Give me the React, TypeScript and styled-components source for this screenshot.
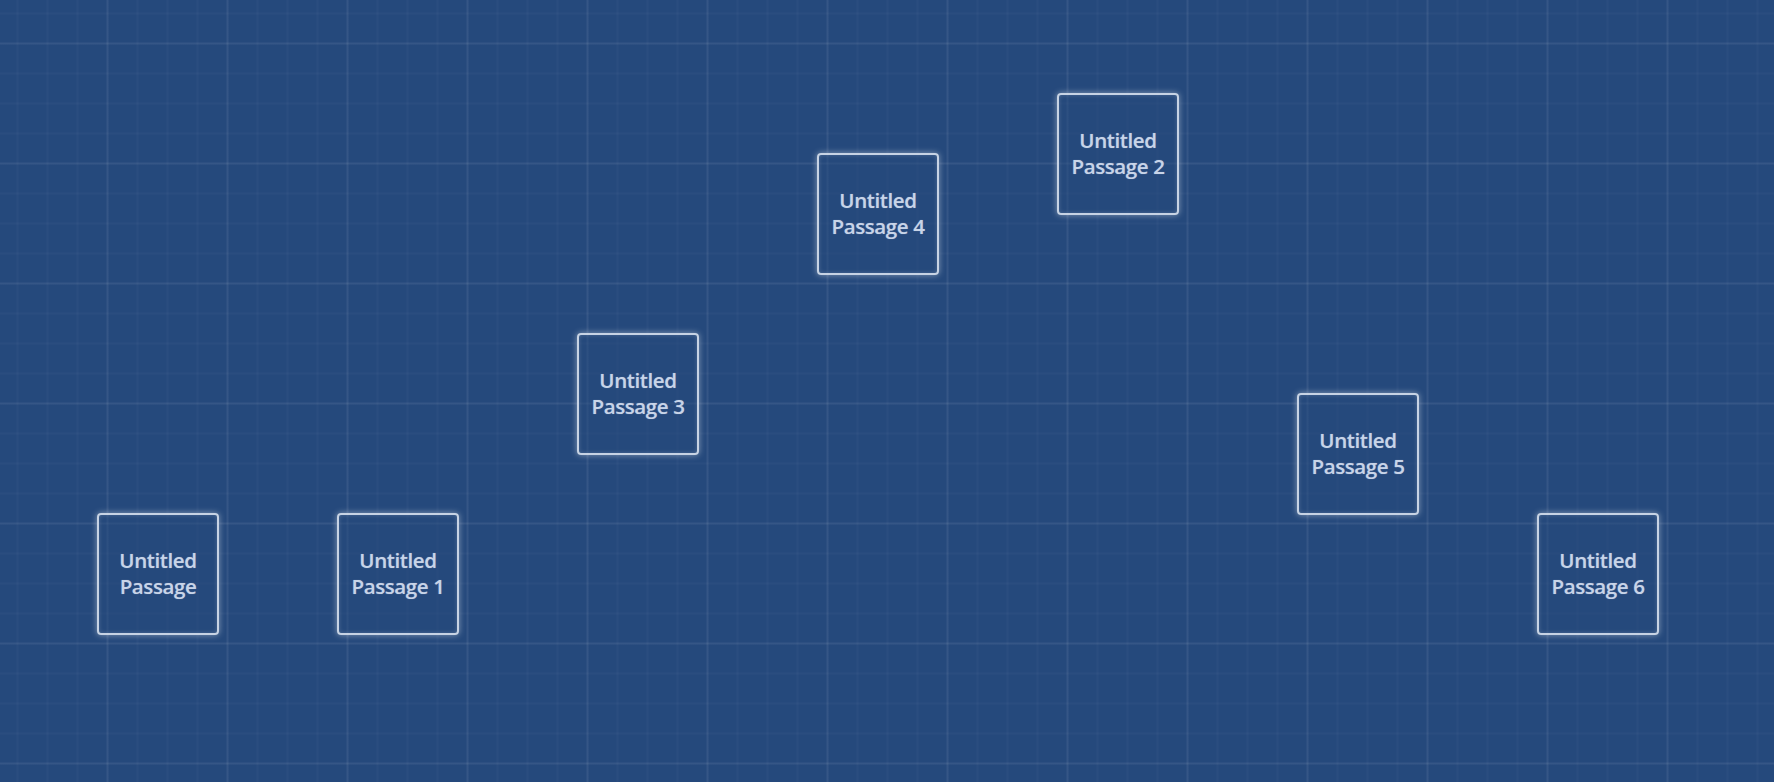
import styled, { createGlobalStyle } from 'styled-components'

const GlobalStyle = createGlobalStyle`
    html, body {
        margin: 0;
        padding: 0;
        height: 100%;
    }
    #root {
        height: 100%;
    }
`

type passage = {
    name: string
    left: number
    top: number
}

const passages: passage[] = [
    { name: 'Untitled Passage', left: 97, top: 513 },
    { name: 'Untitled Passage 1', left: 337, top: 513 },
    { name: 'Untitled Passage 3', left: 577, top: 333 },
    { name: 'Untitled Passage 4', left: 817, top: 153 },
    { name: 'Untitled Passage 2', left: 1057, top: 93 },
    { name: 'Untitled Passage 5', left: 1297, top: 393 },
    { name: 'Untitled Passage 6', left: 1537, top: 513 },
]

const StoryMap = styled.div`
    position: relative;
    width: 100vw;
    height: 100vh;
    overflow: hidden;
    background-color: #25497c;
    background-image:
        linear-gradient(to right, transparent 0, rgba(255, 255, 255, 0.05) 1px, rgba(255, 255, 255, 0.05) 2px, transparent 3px),
        linear-gradient(to bottom, transparent 0, rgba(255, 255, 255, 0.05) 1px, rgba(255, 255, 255, 0.05) 2px, transparent 3px),
        linear-gradient(to right, transparent 0, rgba(255, 255, 255, 0.025) 1px, rgba(255, 255, 255, 0.025) 2px, transparent 3px),
        linear-gradient(to bottom, transparent 0, rgba(255, 255, 255, 0.025) 1px, rgba(255, 255, 255, 0.025) 2px, transparent 3px);
    background-size: 120px 120px, 120px 120px, 30px 30px, 30px 30px;
    background-position: 106px 0, 0 42px, 16px 0, 0 12px;
    font-family: "Open Sans", "Noto Sans", sans-serif;
`

const PassageCard = styled.div<{ $left: number; $top: number }>`
    position: absolute;
    left: ${p => p.$left}px;
    top: ${p => p.$top}px;
    width: 122px;
    height: 122px;
    box-sizing: border-box;
    display: flex;
    align-items: center;
    justify-content: center;
    padding: 0 4px 2px;
    border: 2px solid rgba(222, 231, 244, 0.88);
    border-radius: 4px;
    box-shadow: 0 0 6px rgba(255, 255, 255, 0.45), inset 0 0 4px rgba(255, 255, 255, 0.2);
    background-color: rgba(37, 73, 124, 0.5);
`

const PassageName = styled.span`
    color: #c8d4e8;
    font-size: 20.5px;
    font-weight: 600;
    line-height: 26px;
    text-align: center;
    letter-spacing: -0.4px;
    text-shadow: 0 0 1px rgba(200, 212, 232, 0.5);
`

export default function App() {
    return (
        <>
            <GlobalStyle />
            <StoryMap>
                {passages.map(p => (
                    <PassageCard key={p.name} $left={p.left} $top={p.top}>
                        <PassageName>{p.name}</PassageName>
                    </PassageCard>
                ))}
            </StoryMap>
        </>
    )
}
